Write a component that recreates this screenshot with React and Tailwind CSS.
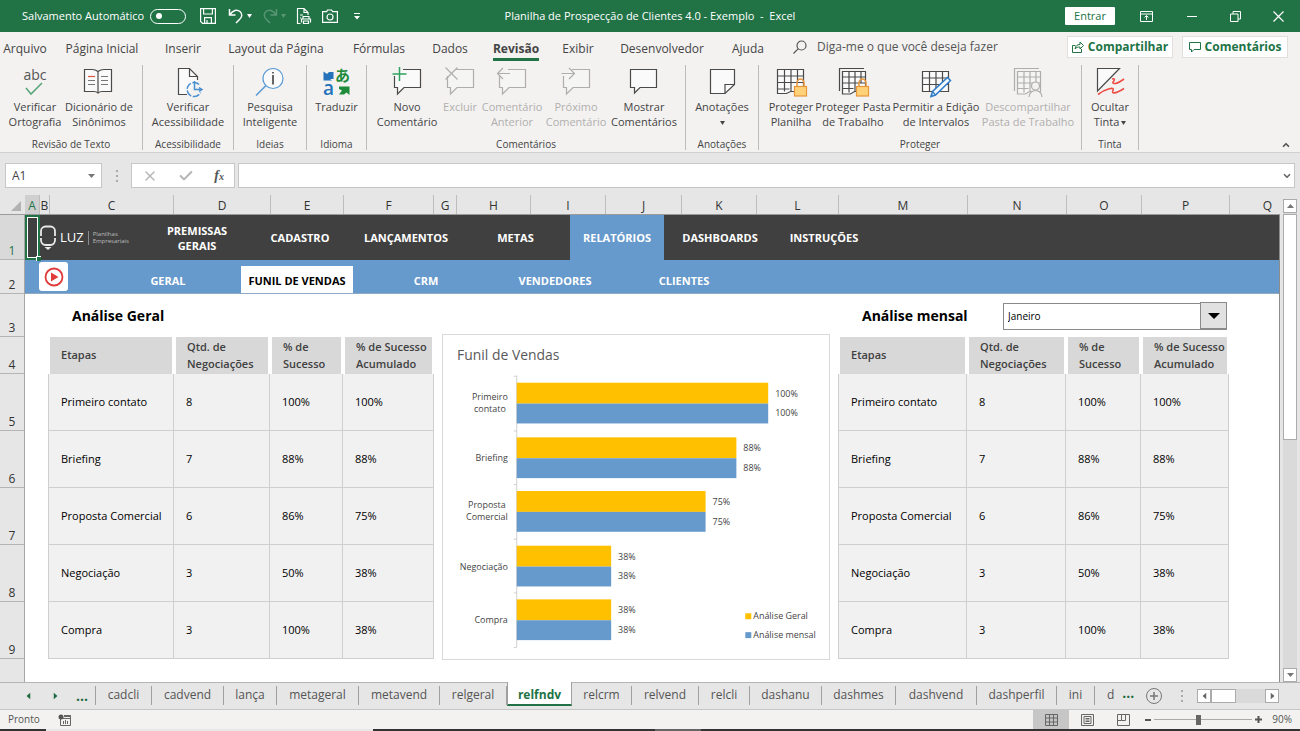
import React from 'react';
import { ChevronDown, ChevronUp, Check, X } from 'lucide-react';

const menuTabs = [
  { name: 'Arquivo', width: 'w-[50px]' },
  { name: 'Página Inicial', width: 'w-[104px]' },
  { name: 'Inserir', width: 'w-[58px]' },
  { name: 'Layout da Página', width: 'w-32' },
  { name: 'Fórmulas', width: 'w-[78px]' },
  { name: 'Dados', width: 'w-16' },
  { name: 'Revisão', width: 'w-[68px]' },
  { name: 'Exibir', width: 'w-14' },
  { name: 'Desenvolvedor', width: 'w-28' },
  { name: 'Ajuda', width: 'w-[60px]' },
];

const columns = [
  { name: 'A', width: 'w-[15px] shrink-0 bg-[#cfcfcf] text-[#217346]' },
  { name: 'B', width: 'w-[10px] shrink-0' },
  { name: 'C', width: 'w-[124px] shrink-0' },
  { name: 'D', width: 'w-[97px] shrink-0' },
  { name: 'E', width: 'w-[73px] shrink-0' },
  { name: 'F', width: 'w-[90px] shrink-0' },
  { name: 'G', width: 'w-[23px] shrink-0' },
  { name: 'H', width: 'w-[74px] shrink-0' },
  { name: 'I', width: 'w-[75px] shrink-0' },
  { name: 'J', width: 'w-[76px] shrink-0' },
  { name: 'K', width: 'w-[75px] shrink-0' },
  { name: 'L', width: 'w-[82px] shrink-0' },
  { name: 'M', width: 'w-[129px] shrink-0' },
  { name: 'N', width: 'w-[99px] shrink-0' },
  { name: 'O', width: 'w-[75px] shrink-0' },
  { name: 'P', width: 'w-[88px] shrink-0' },
];

const rows = [
  { n: 1, height: 'h-[45px] bg-[#d9d9d9] text-[#217346]' },
  { n: 2, height: 'h-[34px]' },
  { n: 3, height: 'h-[43px]' },
  { n: 4, height: 'h-[37px]' },
  { n: 5, height: 'h-[57px]' },
  { n: 6, height: 'h-[57px]' },
  { n: 7, height: 'h-[57px]' },
  { n: 8, height: 'h-[57px]' },
  { n: 9, height: 'h-[57px]' },
];

const mainNav = [
  { label: 'PREMISSAS GERAIS', width: 'w-[104px] px-4' },
  { label: 'CADASTRO', width: 'w-[102px]' },
  { label: 'LANÇAMENTOS', width: 'w-[110px]' },
  { label: 'METAS', width: 'w-[109px]' },
  { label: 'RELATÓRIOS', width: 'w-[94px] bg-[#6699cc]' },
  { label: 'DASHBOARDS', width: 'w-[112px]' },
  { label: 'INSTRUÇÕES', width: 'w-[96px]' },
];

const subNav = ['GERAL', 'FUNIL DE VENDAS', 'CRM', 'VENDEDORES', 'CLIENTES'];

const stages = [
  { name: 'Primeiro contato', lines: ['Primeiro', 'contato'], mid: 47, qty: 8, rate: '100%', total: '100%', value: 1 },
  { name: 'Briefing', lines: ['Briefing'], qty: 7, rate: '88%', total: '88%', value: 0.875 },
  { name: 'Proposta Comercial', lines: ['Proposta', 'Comercial'], mid: 44, qty: 6, rate: '86%', total: '75%', value: 0.75 },
  { name: 'Negociação', lines: ['Negociação'], qty: 3, rate: '50%', total: '38%', value: 0.375 },
  { name: 'Compra', lines: ['Compra'], qty: 3, rate: '100%', total: '38%', value: 0.375 },
];

const sheetTabs = [
  { name: 'cadcli', width: 'w-14' },
  { name: 'cadvend', width: 'w-[72px]' },
  { name: 'lança', width: 'w-[53px]' },
  { name: 'metageral', width: 'w-[82px]' },
  { name: 'metavend', width: 'w-[81px]' },
  { name: 'relgeral', width: 'w-[67px]' },
  { name: 'relfndv', width: 'w-[65px]' },
  { name: 'relcrm', width: 'w-[60px]' },
  { name: 'relvend', width: 'w-[67px]' },
  { name: 'relcli', width: 'w-[51px]' },
  { name: 'dashanu', width: 'w-[72px]' },
  { name: 'dashmes', width: 'w-[74px]' },
  { name: 'dashvend', width: 'w-[81px]' },
  { name: 'dashperfil', width: 'w-[80px]' },
  { name: 'ini', width: 'w-[38px]' },
];

const Caret = ({ className = '', size = 'w-[5px] h-1' }) => (
  <svg viewBox="0 0 6 4" preserveAspectRatio="none" className={`inline-block ${size} ${className}`} fill="currentColor">
    <path d="M0 0h6L3 4z" />
  </svg>
);

const Icon = ({ children, className = '' }) => (
  <svg viewBox="0 0 32 32" className={`w-8 h-8 overflow-visible ${className}`} fill="none" stroke="#4a4a4a" strokeWidth="1.2">
    {children}
  </svg>
);

const Bubble = () => <path d="M3.500 10V21.500H6.500V28L13 21.500H29.500V3.500H12" fill="#fafafa" />;

const SpellIcon = () => (
  <Icon>
    <text x="16" y="14" textAnchor="middle" fontSize="14" fill="#555" stroke="none">abc</text>
    <path d="M7 22l5 6 11-11" stroke="#5aa77c" strokeWidth="1.600" />
  </Icon>
);

const BookIcon = () => (
  <Icon>
    <path d="M15 5.500C13 4 11 3.500 9 3.500H1.500V25.500H11c2 0 3 .5 4 1.500 1-1 2-1.500 4-1.500h9.500V3.500H21c-2 0-4 .5-6 2z" fill="#fafafa" />
    <path d="M15 5.500V27" />
    <path d="M5 14.500h7M5 18.500h7M18 10.500h7M18 14.500h7M18 18.500h7" stroke="#777" />
    <path d="M5 10.500h7" stroke="#e2583e" />
  </Icon>
);

const AccessIcon = () => (
  <Icon>
    <path d="M15 28.500H6.500V2.500H17.500L25.500 10.500V14" fill="#fafafa" />
    <path d="M17.500 2.500V10.500H25.500" />
    <path d="M27 18.500a7 7 0 1 0 1.500 8" stroke="#4a90d0" strokeDasharray="7 1.500" strokeWidth="1.500" />
    <path d="M22.500 15v8.500H29M27 21.500l3 2-3 2" stroke="#4a90d0" strokeWidth="1.500" />
  </Icon>
);

const InsightIcon = () => (
  <Icon>
    <circle cx="19" cy="12.500" r="10" fill="#fafafa" stroke="#5b9bd5" />
    <path d="M12 19.500L2 29.500" stroke="#5b9bd5" strokeWidth="1.600" />
    <path d="M19 9v9.500M19 6v1.500" stroke="#333" strokeWidth="1.500" />
  </Icon>
);

const TranslateIcon = () => (
  <Icon>
    <text x="14" y="15" fontSize="15" fontWeight="bold" fill="#1e8b3a" stroke="none" className="font-['Noto_Sans_CJK_JP',sans-serif]">あ</text>
    <text x="2" y="29" fontSize="19" fontWeight="600" fill="#2372ba" stroke="none">a</text>
    <path d="M2.500 5.500L6 8l2-2h4.500v7H9l2 1.500H2.500z" fill="#2372ba" stroke="none" />
    <path d="M18 20.500h10.500V29L25.500 26.500l-2.500 2h-5l3-4-3-1.500z" fill="#1e8b3a" stroke="none" />
  </Icon>
);

const NewCommentIcon = () => (
  <Icon>
    <Bubble />
    <path d="M8.500 1v14M1.500 8h14" stroke="#2fa35f" strokeWidth="1.500" />
  </Icon>
);

const DeleteCommentIcon = () => (
  <Icon className="opacity-40">
    <Bubble />
    <path d="M1.500 1.500l12 12M13.500 1.500l-12 12" />
  </Icon>
);

const PrevCommentIcon = () => (
  <Icon className="opacity-40">
    <Bubble />
    <path d="M7 2L1.500 7.500 7 13M1.500 7.500H14" />
  </Icon>
);

const NextCommentIcon = () => (
  <Icon className="opacity-40">
    <Bubble />
    <path d="M9 2l5.500 5.500L9 13M1.500 7.500h13" />
  </Icon>
);

const ShowCommentIcon = () => (
  <Icon>
    <path d="M2.500 3.500h26V21.500H12L6.500 27V21.500h-4z" fill="#fafafa" />
  </Icon>
);

const NoteIcon = () => (
  <Icon>
    <path d="M4.500 3.500h24v15l-9.500 9h-14.500z" fill="#fafafa" />
    <path d="M19 27.500v-9h9.500" />
  </Icon>
);

const SheetLines = () => (
  <>
    <path d="M2.500 3.500h26v22h-13l-4 2h-9z" fill="#fafafa" />
    <path d="M2.500 10h26M2.500 16.500h26M2.500 23h12M9.500 3.500v22M16 3.500v22M22.500 3.500V17" />
  </>
);

const Lock = () => (
  <>
    <path d="M22 21v-4a3.500 4 0 0 1 7 0v4" stroke="#e8963a" strokeWidth="1.500" />
    <rect x="19.500" y="20.500" width="12" height="9.500" fill="#ffd27a" stroke="#e8963a" />
  </>
);

const ProtectSheetIcon = () => (
  <Icon>
    <SheetLines />
    <Lock />
  </Icon>
);

const SmallSheet = () => (
  <>
    <path d="M2.500 25V2.500H27" />
    <path d="M5.500 5.500h23v20h-11l-4 2.500h-8z" fill="#fafafa" />
    <path d="M5.500 11h23M5.500 17h23M5.500 22.500h11M12 5.500v21M18 5.500v20M24 5.500V17" />
  </>
);

const ProtectBookIcon = () => (
  <Icon>
    <SmallSheet />
    <Lock />
  </Icon>
);

const AllowEditIcon = () => (
  <Icon>
    <path d="M2.500 5.500h26v20h-26z" fill="#fafafa" />
    <path d="M2.500 12h26M2.500 18.500h26M9.500 5.500v20M16 5.500v20M22.500 5.500V20" />
    <path d="M27.500 11.500l3 3L15.500 29l-4.500 1.500 1.500-5z" fill="#f3f8fd" stroke="#2e7cc8" strokeWidth="1.500" />
    <path d="M12.500 25.500l3 3.500M11 30.500l1-2" stroke="#2e7cc8" />
  </Icon>
);

const UnshareIcon = () => (
  <Icon className="opacity-40">
    <SmallSheet />
    <path d="M17 31a6.500 6.500 0 0 1 13 0z" fill="#f3f2f1" stroke="none" />
    <circle cx="23.500" cy="20" r="4" fill="#f3f2f1" />
    <path d="M17 31a6.500 6.500 0 0 1 13 0" />
  </Icon>
);

const InkIcon = () => (
  <Icon>
    <path d="M3.500 2.500h22L3.500 25z" fill="#fafafa" />
    <path d="M18 13c3-1 3 1 1 3-1 2 3 3 11-3M4 28.500c8-6 17-8 15-4s3 3 11-2" stroke="#ee4b45" strokeWidth="1.600" />
  </Icon>
);

const ribbonGroups = [
  {
    title: 'Revisão de Texto',
    width: 'w-[143px]',
    pad: 'pl-[3px]',
    items: [
      { label: 'Verificar\nOrtografia', icon: <SpellIcon />, width: 'w-16' },
      { label: 'Dicionário de\nSinônimos', icon: <BookIcon />, width: 'w-16' },
    ],
  },
  {
    title: 'Acessibilidade',
    width: 'w-[91px]',
    items: [{ label: 'Verificar\nAcessibilidade', icon: <AccessIcon />, width: 'w-full' }],
  },
  {
    title: 'Ideias',
    width: 'w-[73px]',
    items: [{ label: 'Pesquisa\nInteligente', icon: <InsightIcon />, width: 'w-full' }],
  },
  {
    title: 'Idioma',
    width: 'w-[60px]',
    items: [{ label: 'Traduzir', icon: <TranslateIcon />, width: 'w-full' }],
  },
  {
    title: 'Comentários',
    width: 'w-[319px]',
    pad: 'pl-[6px]',
    items: [
      { label: 'Novo\nComentário', icon: <NewCommentIcon />, width: 'w-[68px]' },
      { label: 'Excluir', icon: <DeleteCommentIcon />, width: 'w-[38px]', disabled: true },
      { label: 'Comentário\nAnterior', icon: <PrevCommentIcon />, width: 'w-[66px]', disabled: true },
      { label: 'Próximo\nComentário', icon: <NextCommentIcon />, width: 'w-[62px]', disabled: true },
      { label: 'Mostrar\nComentários', icon: <ShowCommentIcon />, width: 'w-[74px]' },
    ],
  },
  {
    title: 'Anotações',
    width: 'w-[73px]',
    items: [{ label: 'Anotações\n', icon: <NoteIcon />, width: 'w-full', caret: true }],
  },
  {
    title: 'Proteger',
    width: 'w-[323px]',
    pad: 'pl-[6px]',
    items: [
      { label: 'Proteger\nPlanilha', icon: <ProtectSheetIcon />, width: 'w-[52px]' },
      { label: 'Proteger Pasta\nde Trabalho', icon: <ProtectBookIcon />, width: 'w-[72px]' },
      { label: 'Permitir a Edição\nde Intervalos', icon: <AllowEditIcon />, width: 'w-[94px]' },
      { label: 'Descompartilhar\nPasta de Trabalho', icon: <UnshareIcon />, width: 'w-[90px]', disabled: true },
    ],
  },
  {
    title: 'Tinta',
    width: 'w-[57px]',
    items: [{ label: 'Ocultar\nTinta', icon: <InkIcon />, width: 'w-full', caret: true }],
  },
];

const TitleBar = () => (
  <header className="relative h-8 shrink-0 bg-[#217346] text-white text-[11px] flex items-center pl-[22px]">
    <label className="flex items-center gap-[6px] whitespace-nowrap">
      Salvamento Automático
      <input
        type="checkbox"
        className="appearance-none w-9 h-[15px] rounded-full border border-white flex items-center px-[5px] before:w-[6px] before:h-[6px] before:rounded-full before:bg-white"
      />
    </label>
    <div className="flex items-center ml-[14px]">
      <button aria-label="Salvar" className="w-4">
        <svg viewBox="0 0 16 16" className="w-4 h-4" fill="none" stroke="currentColor" strokeWidth="1.200">
          <path d="M.600.600h14.800v14.800H2.600L.600 13.400zM3.600.600v5.400h8.800V.600M4.600 15.400V9.600h6.800v5.800M7 12v3" />
        </svg>
      </button>
      <button aria-label="Desfazer" className="flex items-center gap-[3px] ml-3">
        <svg viewBox="0 0 16 16" className="w-4 h-4" fill="none" stroke="currentColor" strokeWidth="1.500">
          <path d="M1.500 1v6h6M1.500 7C5 2 9 1 12 3.500s2 6-1 8.500l-3 3" />
        </svg>
        <Caret />
      </button>
      <button aria-label="Refazer" disabled className="flex items-center gap-[3px] ml-[10px] opacity-25">
        <svg viewBox="0 0 16 16" className="w-4 h-4" fill="none" stroke="currentColor" strokeWidth="1.500">
          <path d="M14.500 1v6h-6M14.500 7C11 2 7 1 4 3.500s-2 6 1 8.500l3 3" />
        </svg>
        <Caret />
      </button>
      <button aria-label="Visualizar impressão" className="w-4 ml-[10px]">
        <svg viewBox="0 0 16 18" className="w-4 h-[18px]" fill="none" stroke="currentColor" strokeWidth="1.200">
          <path d="M4.500 16.500h-3V1.500H8L12 5.500V8M8 1.500v4h4" />
          <path d="M7 12V9.500h6V12M5.500 15.500V12h9v3.500M7.500 14h5v2.500h-5zM4 8h3M4 11h1" />
        </svg>
      </button>
      <button aria-label="Câmera" className="w-4 ml-[10px]">
        <svg viewBox="0 0 16 14" className="w-4 h-[14px]" fill="none" stroke="currentColor" strokeWidth="1.200">
          <path d="M.600 2.600h4L5.600 1h4l1 1.600h4.800v10.800H.600z" />
          <circle cx="8" cy="8" r="3" />
        </svg>
      </button>
      <button aria-label="Personalizar" className="ml-4">
        <svg viewBox="0 0 6 7" className="w-[6px] h-[7px]" fill="currentColor">
          <path d="M0 0h6v1H0zM0 3h6L3 6.500z" />
        </svg>
      </button>
    </div>
    <h1 className="absolute left-1/2 -translate-x-1/2 whitespace-pre">
      Planilha de Prospecção de Clientes 4.0 - Exemplo  -  Excel
    </h1>
    <div className="ml-auto flex items-center">
      <button className="w-[50px] h-[18px] bg-white text-[#217346] leading-[18px] rounded-[1px] mr-[25px]">Entrar</button>
      <button aria-label="Opções da faixa" className="w-[13px] mr-[34px]">
        <svg viewBox="0 0 13 11" className="w-[13px] h-[11px]" fill="none" stroke="currentColor">
          <path d="M.5.5h12v10H.5zM.5 3h12M6.500 9V4.500M4.500 6.500l2-2 2 2" />
        </svg>
      </button>
      <button aria-label="Minimizar" className="w-[10px] mr-[33px]">
        <span className="block h-px bg-white"></span>
      </button>
      <button aria-label="Restaurar" className="w-[11px] mr-[32px]">
        <svg viewBox="0 0 11 11" className="w-[11px] h-[11px]" fill="none" stroke="currentColor">
          <path d="M.5 3h7.500v7.500H.5zM3 3V.5h7.500V8H8" />
        </svg>
      </button>
      <button aria-label="Fechar" className="w-[11px] mr-4">
        <svg viewBox="0 0 11 11" className="w-[11px] h-[11px]" fill="none" stroke="currentColor" strokeWidth="1.200">
          <path d="M.5.5l10 10M10.500.5l-10 10" />
        </svg>
      </button>
    </div>
  </header>
);

const MenuTabs = () => (
  <nav className="h-[30px] shrink-0 flex items-center text-[12px] text-[#444]">
    {menuTabs.map((tab) => (
      <a key={tab.name} href="#menu" className={`shrink-0 flex justify-center whitespace-nowrap ${tab.width}`}>
        <span className={tab.name === 'Revisão' ? 'h-[27px] leading-[30px] border-b-[3px] border-[#217346] font-bold' : 'h-[27px] leading-[30px]'}>
          {tab.name}
        </span>
      </a>
    ))}
    <label className="ml-[15px] flex items-center gap-[10px] text-[#555]">
      <svg viewBox="0 0 14 14" className="w-[14px] h-[14px]" fill="none" stroke="currentColor" strokeWidth="1.200">
        <circle cx="8.500" cy="5.500" r="4.500" />
        <path d="M5.300 8.700L.5 13.500" />
      </svg>
      <input placeholder="Diga-me o que você deseja fazer" className="w-52 placeholder:text-[#555] outline-none" />
    </label>
    <div className="ml-auto mr-3 flex gap-[9px] font-bold text-[#217346]">
      <button className="w-[106px] h-[22px] bg-white border border-[#e1dfdd] flex items-center justify-center gap-1">
        <svg viewBox="0 0 12 12" className="w-3 h-3 shrink-0" fill="none" stroke="currentColor">
          <path d="M3.500 4.500h-3v7h9V8M3 8c.5-3 2-4.500 5-4.500V1l3.500 3.500L8 8V6C6 6 4 6.500 3 8z" />
        </svg>
        Compartilhar
      </button>
      <button className="w-[106px] h-[22px] bg-white border border-[#e1dfdd] flex items-center justify-center gap-1">
        <svg viewBox="0 0 12 12" className="w-3 h-3 shrink-0" fill="none" stroke="currentColor">
          <path d="M.5 1.500h11v7H5L2.500 11V8.500h-2z" />
        </svg>
        Comentários
      </button>
    </div>
  </nav>
);

const Ribbon = () => (
  <section className="h-[91px] shrink-0 pt-[3px] flex border-b border-[#d2d0ce] text-[#444]">
    {ribbonGroups.map((group) => (
      <div key={group.title} className={`h-[85px] shrink-0 flex flex-col border-r border-[#bdbbb9] ${group.width}`}>
        <div className={`flex ${group.pad || ''}`}>
          {group.items.map((item) => (
            <button
              key={item.label}
              disabled={item.disabled}
              className={`shrink-0 flex flex-col items-center text-[11px] leading-[15px] disabled:text-[#b1afad] ${item.width}`}
            >
              <span className="h-[34px] pt-px">{item.icon}</span>
              <span className="whitespace-pre text-center">
                {item.label}
                {item.caret && <Caret className="ml-[2px] align-middle" />}
              </span>
            </button>
          ))}
        </div>
        <span className="mt-auto text-center text-[10px] leading-3 whitespace-nowrap">{group.title}</span>
      </div>
    ))}
    <button aria-label="Recolher faixa" className="ml-auto mr-[9px] mb-[2px] self-end text-[#555]">
      <ChevronUp className="w-[10px] h-[10px]" strokeWidth={4} />
    </button>
  </section>
);

const FormulaBar = () => (
  <section className="h-[42px] shrink-0 bg-[#e6e6e6] pt-[10px] px-[5px] flex text-[#444]">
    <div className="w-[97px] h-[25px] shrink-0 bg-white border border-[#c8c6c4] flex items-center">
      <input aria-label="Caixa de nome" defaultValue="A1" className="w-[82px] pl-[6px] text-[12px] outline-none" />
      <button aria-label="Abrir lista de nomes" className="text-[#777] flex">
        <Caret size="w-[7px] h-1" />
      </button>
    </div>
    <span className="w-[29px] shrink-0 h-[25px] flex flex-col items-center justify-center gap-[3px]">
      <i className="w-[2px] h-[2px] bg-[#aaa]"></i>
      <i className="w-[2px] h-[2px] bg-[#aaa]"></i>
      <i className="w-[2px] h-[2px] bg-[#aaa]"></i>
    </span>
    <div className="w-[104px] h-[25px] shrink-0 bg-white border border-[#c8c6c4] flex items-center justify-around">
      <button aria-label="Cancelar" className="text-[#b5b5b5]"><X className="w-4 h-4" /></button>
      <button aria-label="Inserir" className="text-[#b5b5b5]"><Check className="w-4 h-4" strokeWidth={3} /></button>
      <button aria-label="Inserir função" className="font-['Liberation_Serif',serif] italic font-bold text-[14px] text-[#555]">
        f<span className="text-[10px]">x</span>
      </button>
    </div>
    <div className="ml-[3px] flex-1 h-[25px] bg-white border border-[#c8c6c4] flex items-center">
      <input aria-label="Barra de fórmulas" className="flex-1 px-2 text-[12px] outline-none" />
      <button aria-label="Expandir" className="mr-[2px] text-[#666]"><ChevronDown className="w-[10px] h-[10px]" strokeWidth={4} /></button>
    </div>
  </section>
);

const RowHeaders = () => (
  <div className="w-[25px] shrink-0 flex flex-col bg-[#e6e6e6] text-[12px] text-[#333] border-r border-[#a6a6a6]">
    {rows.map((row) => (
      <div key={row.n} className={`flex items-end justify-center leading-[17px] border-b border-[#b5b5b5] ${row.height}`}>{row.n}</div>
    ))}
  </div>
);

const ColumnHeaders = () => (
  <div className="h-5 shrink-0 flex bg-[#e6e6e6] text-[12px] leading-[22px] text-[#333] border-b border-[#9b9b9b]">
    <span className="w-[25px] shrink-0 flex items-end justify-end pr-1 pb-[3px]">
      <svg viewBox="0 0 10 10" className="w-[10px] h-[10px]" fill="#b2b2b2"><path d="M10 0v10H0z" /></svg>
    </span>
    {columns.map((col) => (
      <span key={col.name} className={`flex justify-center border-r border-[#bdbdbd] ${col.width}`}>{col.name}</span>
    ))}
    <span className="flex-1 text-right pr-2">Q</span>
  </div>
);

const Logo = () => (
  <div className="w-[120px] pl-[14px] flex items-center shrink-0 text-white font-normal">
    <svg viewBox="0 0 18 26" className="w-[18px] h-[26px]" fill="none" stroke="#e8e8e8" strokeWidth="1.800">
      <path d="M2 11V6C2 3.500 4 1.500 6.500 1.500h5C14 1.500 16 3.500 16 6v5M2 13v2c0 3 2 5 4.500 5h5c2.500 0 4.500-2 4.500-5v-2" />
      <path d="M5.500 22h7L9 25z" fill="#e8e8e8" stroke="none" />
    </svg>
    <span className="ml-[3px] text-[13px] font-medium">LUZ</span>
    <span className="ml-1 pl-1 h-[14px] border-l border-[#8a8a8a] text-[6px] leading-[7px] text-[#bdbdbd]">
      Planilhas<br />Empresariais
    </span>
  </div>
);

const StagesTable = ({ cols }) => (
  <table className="w-full table-fixed border-separate border-spacing-0 text-[11px] text-left">
    <colgroup>
      {cols.map((c, i) => <col key={i} className={c} />)}
    </colgroup>
    <thead>
      <tr className="h-[37px] leading-[17px] text-[#404040]">
        {['Etapas', 'Qtd. de\nNegociações', '% de\nSucesso', '% de Sucesso\nAcumulado'].map((head) => (
          <th key={head} className="p-0 pl-[11px] pb-[2px] bg-[#d8d8d8] border-x-2 border-white font-semibold whitespace-pre">{head}</th>
        ))}
      </tr>
    </thead>
    <tbody className="text-black">
      {stages.map((s) => (
        <tr key={s.name} className="h-[57px] bg-[#f1f1f1]">
          {[s.name, s.qty, s.rate, s.total].map((cell, i) => (
            <td key={i} className="p-0 pl-3 border-r border-b border-[#cfcfcf] first:border-l whitespace-nowrap">{cell}</td>
          ))}
        </tr>
      ))}
    </tbody>
  </table>
);

const FunnelChart = () => (
  <svg viewBox="0 0 388 326" className="w-[388px] h-[326px] mt-10 shrink-0 bg-white border border-[#d9d9d9]" fontSize="9" fill="#444">
    <text x="14" y="25" fontSize="14" fill="#595959">Funil de Vendas</text>
    <path d="M74 41V314" stroke="#d0d0d0" />
    {stages.map((s, i) => {
      const top = Math.round(41 + i * 54.6);
      const width = Math.round(253 * s.value);
      return (
        <g key={s.name}>
          <path d={`M71 ${top + 0.5}h3`} stroke="#d0d0d0" />
          <rect x="74" y={top + 7} width={width} height="21" fill="#ffc000" />
          <rect x="74" y={top + 28} width={width} height="20" fill="#6699cc" />
          <text x={81 + width} y={top + 21}>{s.total}</text>
          <text x={81 + width} y={top + 41}>{s.total}</text>
          {s.lines.length > 1 ? (
            s.lines.map((line, n) => (
              <text key={line} x={s.mid} y={top + 24 + n * 12} textAnchor="middle">{line}</text>
            ))
          ) : (
            <text x="65" y={top + 31} textAnchor="end">{s.lines[0]}</text>
          )}
        </g>
      );
    })}
    <path d="M71 314.500h3" stroke="#d0d0d0" />
    <rect x="304" y="280" width="6" height="6" fill="#ffc000" />
    <text x="312" y="286">Análise Geral</text>
    <rect x="304" y="299" width="6" height="6" fill="#6699cc" />
    <text x="312" y="305">Análise mensal</text>
  </svg>
);

const Sheet = () => (
  <div className="relative flex-1 min-w-0 bg-white border-r border-[#8c8c8c] overflow-hidden">
    <nav className="h-[45px] bg-[#404040] flex text-white text-[11px] leading-[15px] font-bold">
      <Logo />
      {mainNav.map((item) => (
        <a key={item.label} href="#nav" className={`shrink-0 flex items-center justify-center text-center ${item.width}`}>{item.label}</a>
      ))}
    </nav>
    <nav className="h-[34px] bg-[#6699cc] border-b border-[#8fa9c4] flex text-[11px] font-bold">
      <button aria-label="Vídeo" className="ml-[14px] mt-[2px] w-[29px] h-[29px] bg-white rounded-[3px] flex items-center justify-center shrink-0">
        <svg viewBox="0 0 20 20" className="w-5 h-5" fill="none" stroke="#e03a3a" strokeWidth="1.800">
          <circle cx="10" cy="10" r="8.500" />
          <path d="M7 5.500v9l7.500-4.500z" fill="#e03a3a" stroke="none" />
        </svg>
      </button>
      <div className="ml-11 self-end flex gap-[17px]">
        {subNav.map((label) => (
          <a
            key={label}
            href="#sub"
            className={label === 'FUNIL DE VENDAS'
              ? 'w-28 h-[27px] leading-[30px] text-center bg-white text-black whitespace-nowrap'
              : 'w-28 h-[27px] leading-[30px] text-center text-white'}
          >
            {label}
          </a>
        ))}
      </div>
    </nav>

    {/* Tables on both sides of the chart */}
    <div className="flex gap-2 pl-[23px]">
      <section className="w-[386px] shrink-0">
        <h2 className="h-[43px] pl-6 leading-[44px] text-[14px] font-bold text-black">Análise Geral</h2>
        <StagesTable cols={['w-[126px]', 'w-24', 'w-[73px]', 'w-[91px]']} />
      </section>
      <FunnelChart />
      <section className="w-[391px] shrink-0">
        <div className="h-[43px] flex pl-6">
          <h2 className="w-[141px] leading-[44px] text-[14px] font-bold text-black whitespace-nowrap">Análise mensal</h2>
          <div className="relative mt-2 w-[224px] h-[27px]">
            <select aria-label="Mês" className="appearance-none w-full h-full pl-1 border border-[#8a8a8a] bg-white text-[10px] text-black">
              <option>Janeiro</option>
              <option>Fevereiro</option>
              <option>Março</option>
            </select>
            <span className="absolute right-0 top-0 w-[27px] h-[27px] bg-[#e1e1e1] border border-[#8a8a8a] flex items-center justify-center pointer-events-none">
              <svg viewBox="0 0 12 6" className="w-3 h-[6px]" fill="#000"><path d="M0 0h12L6 6z" /></svg>
            </span>
          </div>
        </div>
        <StagesTable cols={['w-[129px]', 'w-[99px]', 'w-[75px]', 'w-[88px]']} />
      </section>
    </div>

    {/* Selected cell A1 */}
    <div className="absolute left-0 top-0 w-[15px] h-[45px] border-2 border-[#217346] pointer-events-none">
      <div className="w-full h-full border border-white"></div>
      <i className="absolute -right-[3px] -bottom-[3px] w-[5px] h-[5px] bg-[#217346] border-t border-l border-white"></i>
    </div>
  </div>
);

const VerticalScroll = () => (
  <div className="w-5 shrink-0 bg-[#e6e6e6] flex flex-col items-center pt-1">
    <button aria-label="Rolar para cima" className="w-[14px] h-[14px] bg-white border border-[#ababab] flex items-center justify-center text-[#777]">
      <Caret className="rotate-180" size="w-[7px] h-1" />
    </button>
    <div className="w-[14px] flex-1 bg-[#dadada]">
      <div className="h-[226px] mt-px bg-white border border-[#ababab]"></div>
    </div>
    <button aria-label="Rolar para baixo" className="w-[14px] h-[14px] bg-white border border-[#ababab] flex items-center justify-center text-[#777]">
      <Caret size="w-[7px] h-1" />
    </button>
  </div>
);

const SheetTabs = () => (
  <nav className="h-[27px] shrink-0 bg-[#e6e6e6] border-t border-[#b5b5b5] flex text-[12px] text-[#555]">
    <div className="w-24 h-[19px] mt-[3px] shrink-0 flex items-center pl-[25px] text-[#1f6b42] border-r border-[#a0a0a0]">
      <button aria-label="Anterior" className="flex"><Caret className="rotate-90" size="w-[7px] h-1" /></button>
      <button aria-label="Próxima" className="flex ml-5"><Caret className="-rotate-90" size="w-[7px] h-1" /></button>
      <button className="ml-[17px] font-bold leading-4 text-[14px]">...</button>
    </div>
    {sheetTabs.map((tab) => (
      <a
        key={tab.name}
        href="#sheet"
        className={`shrink-0 text-center ${tab.width} ${tab.name === 'relfndv'
          ? 'h-6 -mt-px leading-[26px] bg-white font-bold text-[#217346] border-b-2 border-x border-b-[#217346] border-x-[#a0a0a0]'
          : 'h-[19px] mt-[3px] leading-[18px] border-r border-[#a0a0a0]'}`}
      >
        {tab.name}
      </a>
    ))}
    <a href="#sheet" className="ml-3 leading-6">d</a>
    <button className="ml-2 h-5 font-bold leading-5 text-[14px] text-[#1f6b42]">...</button>
    <button aria-label="Nova planilha" className="ml-3">
      <svg viewBox="0 0 16 16" className="w-4 h-4" fill="none" stroke="#777">
        <circle cx="8" cy="8" r="7.500" />
        <path d="M8 4v8M4 8h8" strokeWidth="1.500" />
      </svg>
    </button>
    <div className="ml-auto mr-[21px] flex items-center">
      <span className="mr-[14px] flex flex-col gap-[3px]">
        <i className="w-[2px] h-[2px] bg-[#aaa]"></i>
        <i className="w-[2px] h-[2px] bg-[#aaa]"></i>
        <i className="w-[2px] h-[2px] bg-[#aaa]"></i>
      </span>
      <button aria-label="Rolar para a esquerda" className="w-[14px] h-[14px] bg-white border border-[#ababab] flex items-center justify-center text-[#666]">
        <Caret className="rotate-90 shrink-0" size="w-[7px] h-1" />
      </button>
      <div className="w-[54px] h-[14px] bg-[#dadada]">
        <div className="w-[25px] h-[14px] bg-white border border-[#ababab]"></div>
      </div>
      <button aria-label="Rolar para a direita" className="w-[14px] h-[14px] bg-white border border-[#ababab] flex items-center justify-center text-[#666]">
        <Caret className="-rotate-90 shrink-0" size="w-[7px] h-1" />
      </button>
    </div>
  </nav>
);

const StatusBar = () => (
  <footer className="h-5 shrink-0 bg-[#f3f2f1] border-t border-[#c6c6c6] flex items-center pl-2 text-[10px] text-[#555]">
    <span>Pronto</span>
    <svg viewBox="0 0 13 12" className="w-[13px] h-3 ml-[18px]" fill="none" stroke="#666">
      <path d="M2.500 4v7.500h10V1.500H6M2.500 4.500h10M5.500 10V7M7.500 10V6M9.500 10V7" />
      <path d="M6 2h6.500" strokeWidth="2" />
      <circle cx="3" cy="3" r="2.500" fill="#555" stroke="none" />
    </svg>
    <div className="ml-auto flex items-center h-full">
      <button aria-label="Normal" className="w-9 h-full bg-[#c6c6c6] flex items-center justify-center">
        <svg viewBox="0 0 13 12" className="w-[13px] h-3" fill="none" stroke="#666">
          <path d="M.5.5h12v11H.5zM.5 4h12M.5 8h12M4.500.5v11M8.500.5v11" />
        </svg>
      </button>
      <button aria-label="Layout da Página" className="w-9 flex justify-center">
        <svg viewBox="0 0 13 12" className="w-[13px] h-3" fill="none" stroke="#666">
          <path d="M.5.5h12v11H.5zM3 2.500h7v7H3zM4.500 4.500h4M4.500 6h4M4.500 7.500h4" />
        </svg>
      </button>
      <button aria-label="Quebra de Página" className="w-9 flex justify-center">
        <svg viewBox="0 0 13 12" className="w-[13px] h-3" fill="none" stroke="#666">
          <path d="M.5.5h12v11H.5zM4.500.5v6h-4M8.500.5v6h-4" />
        </svg>
      </button>
      <button aria-label="Diminuir zoom" className="ml-1 w-[6px] h-[2px] bg-[#555]"></button>
      <input
        type="range"
        aria-label="Zoom"
        min="0"
        max="100"
        defaultValue="45"
        className="appearance-none mx-[3px] w-[98px] h-px bg-[#aaa] [&::-webkit-slider-thumb]:appearance-none [&::-webkit-slider-thumb]:w-[5px] [&::-webkit-slider-thumb]:h-[10px] [&::-webkit-slider-thumb]:bg-[#666]"
      />
      <button aria-label="Aumentar zoom" className="w-[7px]">
        <svg viewBox="0 0 7 7" className="w-[7px] h-[7px]" stroke="#555" strokeWidth="2"><path d="M3.500 0v7M0 3.500h7" /></svg>
      </button>
      <span className="ml-[10px] mr-2">90%</span>
    </div>
  </footer>
);

const App = () => {
  return (
    <div className="h-screen flex flex-col overflow-hidden bg-[#f3f2f1] font-['Open_Sans','Noto_Sans',sans-serif]">
      <TitleBar />
      <MenuTabs />
      <Ribbon />
      <FormulaBar />
      <main className="flex-1 min-h-0 flex">
        <div className="flex-1 min-w-0 flex flex-col">
          <ColumnHeaders />
          <div className="flex-1 min-h-0 flex">
            <RowHeaders />
            <Sheet />
          </div>
        </div>
        <VerticalScroll />
      </main>
      <SheetTabs />
      <StatusBar />
      {/* Taskbar edge */}
      <div className="h-[2px] shrink-0 flex bg-[#333]">
        <span className="w-[46px]"></span>
        <span className="w-[327px] bg-[#e8e8e8]"></span>
        <span className="w-[282px]"></span>
        <span className="w-[46px] bg-[#666]"></span>
      </div>
    </div>
  );
};

export default App;
